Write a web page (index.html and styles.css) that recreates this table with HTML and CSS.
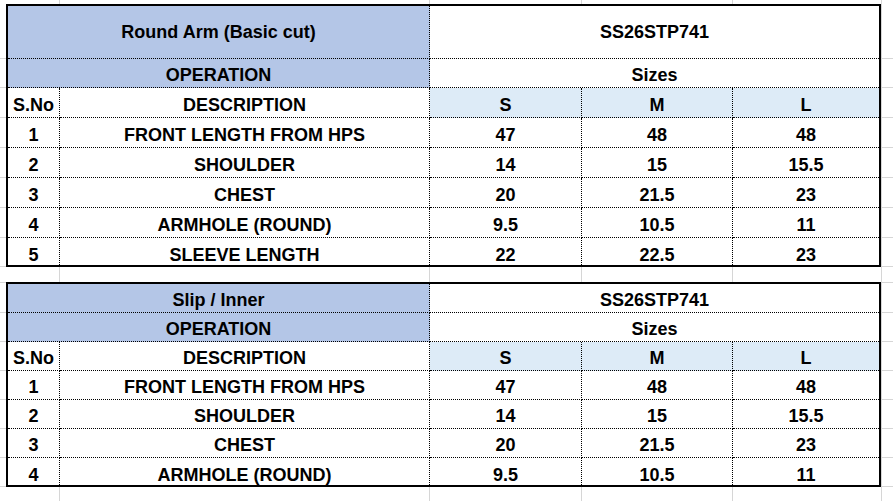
FILE: index.html
```html
<!DOCTYPE html>
<html lang="en">
<head>
<meta charset="utf-8">
<title>Measurement Spec Sheet</title>
<link rel="stylesheet" href="styles.css">
</head>
<body>
<div class="sheet">
  <table class="spec">
    <colgroup>
      <col class="c-no"><col class="c-desc"><col class="c-s"><col class="c-m"><col class="c-l">
    </colgroup>
    <tr class="h-title1">
      <td colspan="2" class="hdr mid">Round Arm (Basic cut)</td>
      <td colspan="3" class="mid">SS26STP741</td>
    </tr>
    <tr class="h29">
      <td colspan="2" class="hdr">OPERATION</td>
      <td colspan="3">Sizes</td>
    </tr>
    <tr class="h30">
      <td>S.No</td><td>DESCRIPTION</td><td class="sz">S</td><td class="sz">M</td><td class="sz">L</td>
    </tr>
    <tr class="h30"><td>1</td><td>FRONT LENGTH FROM HPS</td><td>47</td><td>48</td><td>48</td></tr>
    <tr class="h30"><td>2</td><td>SHOULDER</td><td>14</td><td>15</td><td>15.5</td></tr>
    <tr class="h30"><td>3</td><td>CHEST</td><td>20</td><td>21.5</td><td>23</td></tr>
    <tr class="h30"><td>4</td><td>ARMHOLE (ROUND)</td><td>9.5</td><td>10.5</td><td>11</td></tr>
    <tr class="h27"><td>5</td><td>SLEEVE LENGTH</td><td>22</td><td>22.5</td><td>23</td></tr>
  </table>

  <table class="spec spec-second">
    <colgroup>
      <col class="c-no"><col class="c-desc"><col class="c-s"><col class="c-m"><col class="c-l">
    </colgroup>
    <tr class="h29">
      <td colspan="2" class="hdr">Slip / Inner</td>
      <td colspan="3">SS26STP741</td>
    </tr>
    <tr class="h29">
      <td colspan="2" class="hdr">OPERATION</td>
      <td colspan="3">Sizes</td>
    </tr>
    <tr class="h29">
      <td>S.No</td><td>DESCRIPTION</td><td class="sz">S</td><td class="sz">M</td><td class="sz">L</td>
    </tr>
    <tr class="h29"><td>1</td><td>FRONT LENGTH FROM HPS</td><td>47</td><td>48</td><td>48</td></tr>
    <tr class="h29"><td>2</td><td>SHOULDER</td><td>14</td><td>15</td><td>15.5</td></tr>
    <tr class="h29"><td>3</td><td>CHEST</td><td>20</td><td>21.5</td><td>23</td></tr>
    <tr class="h27"><td>4</td><td>ARMHOLE (ROUND)</td><td>9.5</td><td>10.5</td><td>11</td></tr>
  </table>
</div>
</body>
</html>
```

FILE: styles.css
```css
html, body {
  margin: 0;
  padding: 0;
  background: #ffffff;
}

.sheet {
  width: 893px;
  height: 501px;
  overflow: hidden;
  box-sizing: border-box;
  padding: 4px 0 0 6px;
  background-color: #ffffff;
  background-image:
    linear-gradient(#d6d6d6, #d6d6d6),
    linear-gradient(#d6d6d6, #d6d6d6),
    linear-gradient(#d6d6d6, #d6d6d6),
    linear-gradient(#d6d6d6, #d6d6d6),
    linear-gradient(#d6d6d6, #d6d6d6),
    linear-gradient(#d6d6d6, #d6d6d6),
    linear-gradient(#d6d6d6, #d6d6d6),
    linear-gradient(#d6d6d6, #d6d6d6),
    linear-gradient(#d6d6d6, #d6d6d6),
    linear-gradient(#d6d6d6, #d6d6d6),
    linear-gradient(#d6d6d6, #d6d6d6),
    linear-gradient(#d6d6d6, #d6d6d6),
    linear-gradient(#d6d6d6, #d6d6d6),
    linear-gradient(#d6d6d6, #d6d6d6),
    linear-gradient(#d6d6d6, #d6d6d6),
    linear-gradient(#d6d6d6, #d6d6d6),
    linear-gradient(#d6d6d6, #d6d6d6),
    linear-gradient(#d6d6d6, #d6d6d6),
    linear-gradient(#d6d6d6, #d6d6d6),
    linear-gradient(#d6d6d6, #d6d6d6),
    linear-gradient(#d6d6d6, #d6d6d6);
  background-repeat: no-repeat;
  background-size:
    1px 100%, 1px 100%, 1px 100%, 1px 100%, 1px 100%,
    100% 1px, 100% 1px, 100% 1px, 100% 1px, 100% 1px, 100% 1px, 100% 1px, 100% 1px,
    100% 1px, 100% 1px, 100% 1px, 100% 1px, 100% 1px, 100% 1px, 100% 1px, 100% 1px;
  background-position:
    59px 0, 429px 0, 581px 0, 732px 0, 881px 0,
    0 58px, 0 87px, 0 117px, 0 147px, 0 177px, 0 207px, 0 237px, 0 266px,
    0 282px, 0 312px, 0 341px, 0 370px, 0 399px, 0 428px, 0 457px, 0 486px;
}

.spec {
  box-sizing: border-box;
  width: 875px;
  table-layout: fixed;
  border-collapse: separate;
  border-spacing: 0;
  border: 2px solid #000000;
  background: #ffffff;
  font-family: "Liberation Sans", Arial, sans-serif;
  font-weight: bold;
  font-size: 18px;
  line-height: 20px;
  color: #000000;
}

.spec-second {
  margin-top: 15px;
}

.c-no { width: 52px; }
.c-desc { width: 370px; }
.c-s { width: 152px; }
.c-m { width: 151px; }
.c-l { width: 146px; }

.spec td {
  box-sizing: border-box;
  padding: 0 0 2px 0;
  text-align: center;
  vertical-align: bottom;
  white-space: nowrap;
  border-right: 1px dotted #000000;
  border-bottom: 1px dotted #000000;
}

.spec td:last-child {
  border-right: 0;
}

.spec tr:last-child td {
  border-bottom: 0;
}

.spec td.mid {
  vertical-align: middle;
  padding-bottom: 0;
}

.spec td.hdr {
  background: #b4c6e7;
}

.spec td.sz {
  background: #ddebf7;
}

.h-title1 { height: 53px; }
.h30 { height: 30px; }
.h29 { height: 29px; }
.h27 { height: 27px; }

.spec .h27 td {
  padding-bottom: 0;
}
```
